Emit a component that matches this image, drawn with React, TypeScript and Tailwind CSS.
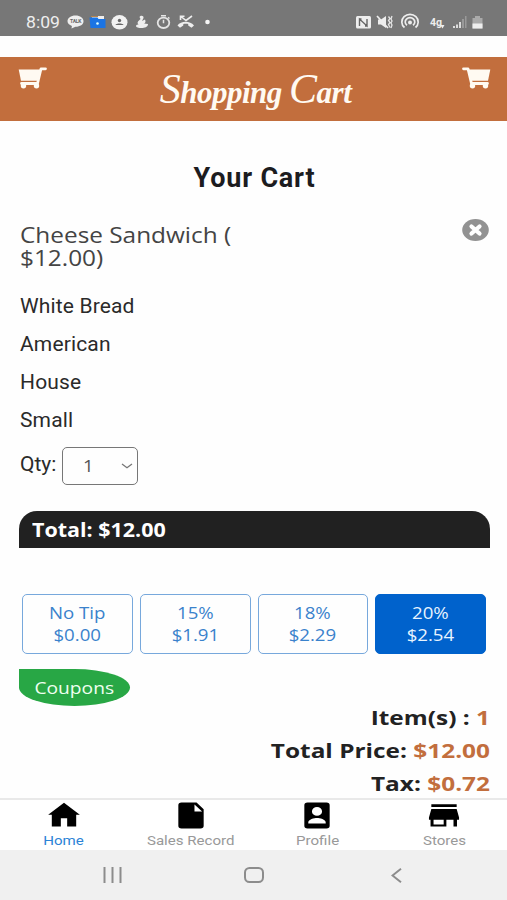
const options = ['White Bread', 'American', 'House', 'Small']

const tips = [
  { label: 'No Tip', amount: '$0.00' },
  { label: '15%', amount: '$1.91' },
  { label: '18%', amount: '$2.29' },
  { label: '20%', amount: '$2.54', active: true },
]

const totals = [
  { label: 'Item(s) :', value: '1' },
  { label: 'Total Price:', value: '$12.00' },
  { label: 'Tax:', value: '$0.72' },
]

const tabs = [
  { label: 'Home', active: true, path: 'M10 20v-6h4v6h5.700v-8.500H22L12 2.800 2 11.500h2.300V20z' },
  { label: 'Sales Record', path: 'M6 2.6h9.5L20 7.5V19.5a2 2 0 0 1-2 2H6a2 2 0 0 1-2-2V4.6a2 2 0 0 1 2-2zM14.2 4v5H19z' },
  {
    label: 'Profile',
    path: 'M4 4.6v14.8a2 2 0 0 0 2 2h12a2 2 0 0 0 2-2V4.6a2 2 0 0 0-2-2H6a2 2 0 0 0-2 2zM15.2 9a3.2 3.2 0 1 1-6.4 0 3.2 3.2 0 0 1 6.4 0zM6.5 17c0-2 3.7-3.1 5.5-3.1s5.5 1.1 5.5 3.1v.8h-11z',
  },
  { label: 'Stores', path: 'M20 3.800H4v2h16zM21.500 13.500L20 7.300H4l-1.500 6.200V15h1v5h10v-5H18v5h2.200v-5h1.300zM11.800 18.500H5.400V15h6.400z' },
]

function CartIcon({ className = '' }: { className?: string }) {
  return (
    <svg className={className} width="29" height="22" viewBox="0 0 29 22" fill="none">
      <path d="M1.500 1.800H6l3.500 14.700h16" stroke="#fffaf2" strokeWidth="2.800" strokeLinecap="round" strokeLinejoin="round" />
      <path d="M5.500 2.500h22.800L26 13.800H8.500z" fill="#fffaf2" />
      <circle cx="10.500" cy="18.700" r="2.700" fill="#fffaf2" />
      <circle cx="23.500" cy="18.700" r="2.700" fill="#fffaf2" />
    </svg>
  )
}

function StatusBar() {
  return (
    <div className="flex h-9 items-center bg-[#777] pt-2 pr-[23px] pl-[26px] text-[#eee]">
      <span className="w-[41px] text-base">
        <span className="inline-block origin-left translate-y-px scale-x-110">8:09</span>
      </span>
      <svg width="148" height="18" viewBox="67 13 148 18" fill="none">
        {/* chat */}
        <path d="M75.500 15.500c4.700 0 8 2.500 8 5.700s-3.300 5.500-8 5.500l-4 1.800.4-2.600c-2.700-1-4.400-2.600-4.400-4.700 0-3.200 3.300-5.700 8-5.700z" fill="#eee" />
        <text x="70" y="23" fontSize="5" fontWeight="700" fill="#666" textLength="11.500">TALK</text>
        {/* wallet */}
        <path d="M92 16h12v3H92z" fill="#eee" />
        <path d="M89.500 17.500h8l1 1.500h7v9H90.500z" fill="#1b74e4" />
        <path d="M91 16.500h7" stroke="#b9854a" />
        <circle cx="97.500" cy="23.500" r="1.300" fill="#dff" />
        {/* contact */}
        <ellipse cx="119.500" cy="22.300" rx="8" ry="7.200" fill="#f2f2f2" />
        <circle cx="119.500" cy="20.500" r="1.700" fill="#666" />
        <path d="M115.500 25c.5-2 7.500-2 8 0z" fill="#666" />
        {/* swan */}
        <path d="M139.500 17c1-2 4.500-1.500 4 1l-1.500 3 3-1.500c1 2 .5 3.500-1 4l4 .5c0 3-3.500 4-6.500 4s-5.500-.5-5.500-2 1.500-1.500 3.500-1.500c-2 0-2.500-2-1-3.500l2-2z" fill="#eee" />
        {/* timer */}
        <ellipse cx="163.500" cy="22.800" rx="5.800" ry="5.200" stroke="#e5e5e5" strokeWidth="1.800" />
        <path d="M161 15.800h5M163.500 19.800v3.500M168 17.300l1.500 1.200" stroke="#e5e5e5" strokeWidth="1.500" />
        {/* missed call */}
        <path d="M177.500 25.500c3.500-5 12.500-5 16.500 0l-2.500 2.300-3.300-2.300v-1.400c-1.400-.4-3.500-.4-4.900 0v1.400l-3.300 2.300z" fill="#eee" />
        <path d="M181 16.500l5 4 6-4.500M180.500 20v-3.700h4" stroke="#eee" strokeWidth="1.600" />
        <circle cx="207.500" cy="22" r="2.300" fill="#f5f5f5" />
      </svg>
      <svg className="ml-auto" width="129" height="18" viewBox="355 13 129 18" fill="none">
        {/* nfc */}
        <rect x="356" y="16" width="15" height="12.500" rx="1.500" fill="#eee" />
        <path d="M359.500 26V19l7.500 7v-7M359.500 19h2M365 26h2" stroke="#666" strokeWidth="1.400" />
        {/* muted */}
        <path d="M378 19.500h3l5-3.500v12l-5-3.500h-3z" fill="#eee" />
        <path d="M377 16l11 12" stroke="#eee" strokeWidth="1.700" />
        <path d="M388.500 16.500l1.500 2-1.500 2 1.500 2-1.500 2 1.500 3M392 16l-1 3 1 2-1 2 1 2-1 3" stroke="#e5e5e5" strokeWidth="1.300" />
        {/* hotspot */}
        <path d="M404.500 27.500a8.200 7.500 0 1 1 11 0M407 25.300a4.800 4.300 0 1 1 6 0" stroke="#eee" strokeWidth="1.700" />
        <circle cx="410" cy="22.600" r="2" fill="#eee" />
        {/* 4g */}
        <text x="430" y="26" fontSize="10.500" fontWeight="700" fill="#eee">4g</text>
        <path d="M440.500 25h4l-2 3.500z" fill="#eee" />
        {/* signal */}
        <path d="M453 28v-2h2v2zM456 28v-3.500h2V28zM459 28v-6h2v6z" fill="#ddd" />
        <path d="M462 28v-9h2v9zM465 28V16h1.500v12z" fill="#999" />
        {/* battery */}
        <path d="M472.500 18h2.500v-2h5v2h2.500v10.500h-10z" fill="#aaa" />
        <path d="M472.500 23.500h10v5h-10z" fill="#eee" />
      </svg>
    </div>
  )
}

export default function App() {
  return (
    <div className="flex h-[900px] w-[507px] flex-col overflow-hidden bg-[#fefefe] font-['Roboto',sans-serif] text-[#222]">
      <StatusBar />

      <header className="mt-[21px] flex h-16 shrink-0 items-start justify-between bg-[#c26e3d] pt-[10px] pr-4 pl-[18px]">
        <CartIcon className="-scale-x-100" />
        <h1 className="ml-0.5 flex h-[46px] w-[194px] items-baseline justify-center font-['Liberation_Serif',serif] text-[31px] leading-[44px] font-bold tracking-[-0.5px] whitespace-pre text-[#fffaf2] italic">
          <span className="text-[42px] font-normal">S</span>hopping <span className="text-[42px] font-normal">C</span>art
        </h1>
        <CartIcon />
      </header>

      <main className="min-h-0 flex-1 overflow-hidden pr-[17px] pl-[19px] font-['Open_Sans',sans-serif]">
        <h2 className="mt-[41px] text-center font-['Roboto',sans-serif] text-[27px] leading-8 font-bold tracking-[0.8px] text-[#1c1c1f]">
          Your Cart
        </h2>

        <div className="mt-[25px] flex items-start justify-between pl-px">
          <h3 className="mt-[5px] origin-left scale-x-[1.16] text-[21px] leading-[23px] text-[#444]">
            Cheese Sandwich (<br />$12.00)
          </h3>
          <button className="mr-px">
            <svg width="27" height="22" viewBox="0 0 27 22">
              <ellipse cx="13.500" cy="11" rx="13.300" ry="11" fill="#929292" />
              <path d="M9.500 7.500l8 7M17.500 7.500l-8 7" stroke="#fff" strokeWidth="4.200" strokeLinecap="round" />
            </svg>
          </button>
        </div>

        <ul className="mt-[17px] pl-px font-['Roboto',sans-serif] text-[21px] leading-[38px] tracking-[0.15px] text-[#2a2a2a]">
          {options.map((option) => (
            <li key={option}>{option}</li>
          ))}
        </ul>

        <div className="mt-2 flex h-[38px] items-center pl-px">
          <span className="-mt-0.5 w-[42px] font-['Roboto',sans-serif] text-[21px] text-[#2a2a2a]">Qty:</span>
          <button className="flex h-[38px] w-[76px] items-center justify-between rounded-[5px] border-[1.5px] border-[#777] pr-1 pl-5 text-base text-[#555]">
            <span className="origin-left scale-x-[1.165]">1</span>
            <svg width="12" height="6" viewBox="0 0 12 6" fill="none">
              <path d="M1 1l5 3.700L11 1" stroke="#777" strokeWidth="1.300" />
            </svg>
          </button>
        </div>

        <div className="mt-[26px] h-[37px] rounded-t-[18px] bg-[#212121] pl-[13px] text-[19px] leading-[38px] font-bold text-white">
          <span className="inline-block origin-left scale-x-[1.13]">Total: $12.00</span>
        </div>

        <div className="mt-[46px] flex gap-[7px] pr-1 pl-[3px]">
          {tips.map((tip) => (
            <button
              key={tip.label}
              className={`h-[60px] flex-1 rounded-[5px] border-[1.5px] text-base leading-[22px] ${
                tip.active ? 'border-[#0062cc] bg-[#0062cc] text-[#e8f4ff]' : 'border-[#77a8dc] text-[#3a82cc]'
              }`}
            >
              <span className="inline-block scale-x-[1.165]">
                {tip.label}
                <br />
                {tip.amount}
              </span>
            </button>
          ))}
        </div>

        <button className="mt-[15px] flex h-[37px] w-[111px] items-center justify-center rounded-[50%] rounded-tl-none bg-[#28a745] text-[17px] text-[#effff0]">
          <span className="scale-x-[1.13]">Coupons</span>
        </button>

        <div className="-mt-[5px] text-right text-[20px] leading-[33px] font-bold">
          {totals.map((row) => (
            <p key={row.label} className="origin-right scale-x-[1.22]">
              {row.label} <span className="text-[#c26e3d]">{row.value}</span>
            </p>
          ))}
        </div>
      </main>

      <nav className="flex h-[52px] shrink-0 border-t-2 border-[#e9e9e9] bg-white">
        {tabs.map((tab) => (
          <a key={tab.label} className="flex flex-1 flex-col items-center pl-px">
            <svg width="38" height="33" viewBox="0 0 24 24" preserveAspectRatio="none" className="-mt-px fill-black" fillRule="evenodd">
              <path d={tab.path} />
            </svg>
            <span
              className={`mt-px scale-x-[1.16] text-[13px] leading-4 whitespace-nowrap ${
                tab.active ? 'text-[#2b83d6]' : 'text-[#999]'
              }`}
            >
              {tab.label}
            </span>
          </a>
        ))}
      </nav>

      <div className="flex h-[50px] shrink-0 items-center justify-between bg-[#f0f0f0] pr-[105px] pl-[103px]">
        <svg width="19" height="16" viewBox="0 0 19 16">
          <path d="M1.500 0v16M9.500 0v16M17.500 0v16" stroke="#8c8c8c" strokeWidth="2" />
        </svg>
        <svg className="mr-[5px]" width="20" height="16" viewBox="0 0 20 16" fill="none">
          <rect x="1" y="1" width="18" height="14" rx="4.500" stroke="#8c8c8c" strokeWidth="2" />
        </svg>
        <svg width="11" height="15" viewBox="0 0 11 15" fill="none">
          <path d="M10 .8L1.500 7.500 10 14.200" stroke="#8c8c8c" strokeWidth="2" />
        </svg>
      </div>
    </div>
  )
}
